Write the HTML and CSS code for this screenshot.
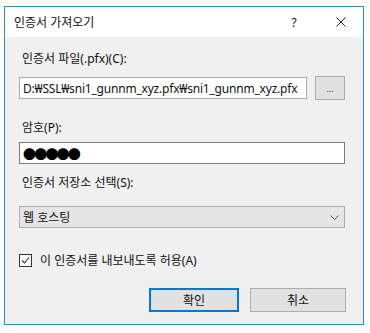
FILE: index.html
```html
<!DOCTYPE html>
<html lang="ko">

<head>
    <meta charset="UTF-8">
    <title>인증서 가져오기</title>
    <link rel="stylesheet" href="styles.css">
</head>

<body>
    <div class="dialog">
        <div class="title-bar">
            <span class="title-text">인증서 가져오기</span>
            <span class="title-help">?</span>
            <span class="title-close">
                <svg viewBox="0 0 10 10" width="10" height="10">
                    <path d="M0.5,0.5 L9.5,9.5 M9.5,0.5 L0.5,9.5" stroke="#222" stroke-width="1" fill="none" />
                </svg>
            </span>
        </div>

        <div class="dialog-body">
            <div class="field-label label-file">인증서 파일(.pfx)(C):</div>
            <div class="file-row">
                <div class="text-box file-path">D:₩SSL₩sni1_gunnm_xyz.pfx₩sni1_gunnm_xyz.pfx</div>
                <button class="browse-button">...</button>
            </div>

            <div class="field-label label-password">암호(P):</div>
            <div class="text-box password-box">●●●●●</div>

            <div class="field-label label-store">인증서 저장소 선택(S):</div>
            <div class="combo-box">
                <span>웹 호스팅</span>
                <svg class="combo-arrow" viewBox="0 0 9 5" width="9" height="5">
                    <path d="M0.5,0.5 L4.5,4.5 L8.5,0.5" stroke="#555" stroke-width="1" fill="none" />
                </svg>
            </div>

            <div class="check-row">
                <span class="check-box">
                    <svg viewBox="0 0 11 11" width="11" height="11">
                        <path d="M2,5.5 L4.5,8 L9,2.5" stroke="#333" stroke-width="1.1" fill="none" />
                    </svg>
                </span>
                <span class="check-label">이 인증서를 내보내도록 허용(A)</span>
            </div>

            <div class="button-row">
                <button class="dialog-button primary">확인</button>
                <button class="dialog-button">취소</button>
            </div>
        </div>
    </div>
</body>

</html>
```

FILE: styles.css
```css
* {
    margin: 0;
    padding: 0;
    box-sizing: border-box;
    font-family: "Noto Sans", "Noto Sans CJK KR", sans-serif;
}

body {
    background-color: #fcfcfa;
    color: #111111;
    font-size: 12px;
    width: 370px;
    height: 333px;
    overflow: hidden;
}

.dialog {
    margin: 6px 0 0 4px;
    width: 360px;
    height: 319px;
    border: 1px solid #2f89b5;
    background-color: #f0f0f0;
    display: flex;
    flex-direction: column;
}

.title-bar {
    height: 30px;
    background-color: #ffffff;
    display: flex;
    align-items: center;
    padding-left: 9px;
}

.title-text {
    flex: 1;
    font-size: 12px;
}

.title-help {
    width: 20px;
    text-align: center;
    font-size: 12px;
    margin-right: 32px;
}

.title-close {
    display: flex;
    margin-right: 17px;
}

.dialog-body {
    padding: 14px 16px 0 14px;
    display: flex;
    flex-direction: column;
}

.field-label {
    line-height: 16px;
    padding-left: 3px;
}

.label-file {
    margin-bottom: 9px;
}

.file-row {
    display: flex;
    align-items: center;
    gap: 8px;
}

.text-box {
    background-color: #ffffff;
    height: 22px;
    border: 1px solid #7a7a7a;
    display: flex;
    align-items: center;
    padding-left: 3px;
    white-space: nowrap;
    overflow: hidden;
}

.file-path {
    width: 288px;
    border-color: #abadb3;
    letter-spacing: -0.2px;
}

.browse-button {
    width: 30px;
    height: 24px;
    background-color: #e1e1e1;
    border: 1px solid #adadad;
    font-size: 9px;
    color: #444444;
}

.label-password {
    margin-top: 20px;
    margin-bottom: 6px;
}

.password-box {
    width: 326px;
    font-size: 13px;
    letter-spacing: -1.8px;
    padding-left: 3px;
    color: #000000;
}

.label-store {
    margin-top: 11px;
    margin-bottom: 15px;
}

.combo-box {
    width: 326px;
    height: 22px;
    background-color: #e5e5e5;
    border: 1px solid #acacac;
    display: flex;
    align-items: center;
    justify-content: space-between;
    padding: 0 5px 0 3px;
}

.check-row {
    display: flex;
    align-items: center;
    margin-top: 23px;
    gap: 8px;
}

.check-box {
    width: 13px;
    height: 13px;
    border: 1px solid #333333;
    background-color: #ffffff;
    display: flex;
    align-items: center;
    justify-content: center;
}

.button-row {
    display: flex;
    justify-content: flex-end;
    gap: 11px;
    margin-top: 19px;
    padding-right: 1px;
}

.dialog-button {
    width: 96px;
    height: 24px;
    background-color: #e1e1e1;
    border: 1px solid #adadad;
    font-size: 12px;
    color: #111111;
}

.dialog-button.primary {
    width: 90px;
    border: 2px solid #0078d7;
}
```
